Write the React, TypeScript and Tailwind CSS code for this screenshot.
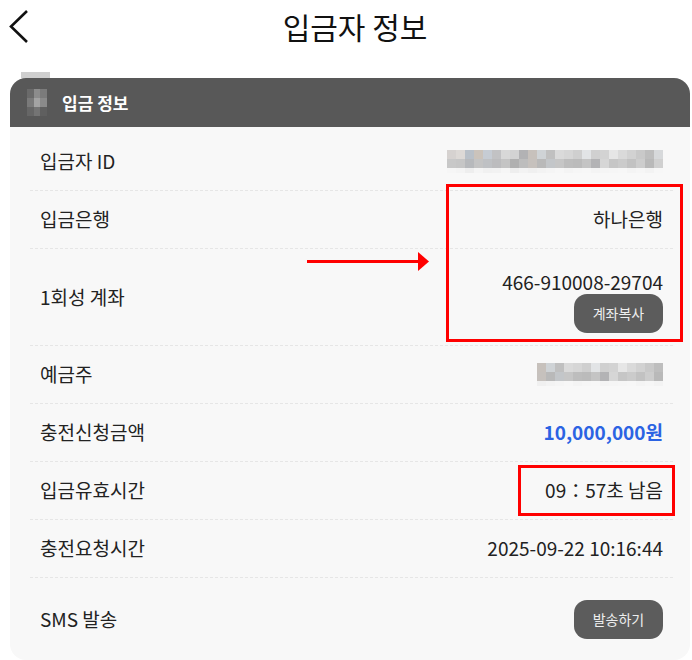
import type { ReactNode } from "react";

const blurTop = [
  "#d6d2d0", "#ddd9d6", "#b9c0c8", "#cbc3bb", "#c6ccd4", "#c2c2c4", "#d8d8d8", "#d3d3d3",
  "#b2b2b4", "#c7c1bc", "#cfd3d6", "#c0c0c0", "#dadada", "#d6d6d6", "#cfcfcf", "#e2e4e6",
  "#d0d0d0", "#d3d3d3", "#e6e6e6", "#dadada", "#d2d2d2", "#c9c9c9", "#bebebe", "#d7d9db",
];
const blurMid = [
  "#c8c8c8", "#c6c6c6", "#b7b9bc", "#c4c4c4", "#bfc1c4", "#bcbcbe", "#c4c4c4", "#b0b0b0",
  "#bdbdbd", "#c6c1bd", "#b9b9b9", "#c3c6c9", "#c6c6c6", "#bdbdbd", "#bbbbbb", "#c4c4c4",
  "#b3b3b5", "#d6d6d6", "#c6c6c6", "#cbcbcb", "#c2c2c2", "#cdcdcd", "#b9b9b9", "#d0d0d0",
];
const blurBot = [
  "#f6f6f6", "#f4f4f4", "#eeeeee", "#f5f5f5", "#f1f1f1", "#f2f2f2", "#f6f6f6", "#eeeeee",
  "#f3f3f3", "#f0f0f0", "#f3f3f3", "#f5f5f5", "#f7f7f7", "#f4f4f4", "#f6f6f6", "#f7f7f7",
  "#f4f4f4", "#f5f5f5", "#f6f6f6", "#f7f7f7", "#f4f4f4", "#f6f6f6", "#f3f3f3", "#f7f7f7",
];

// 모자이크 처리된 값
function Mosaic({ cols, offset = 0 }: { cols: number; offset?: number }) {
  const rows = [blurTop, blurMid, blurBot];
  return (
    <div className="flex flex-col">
      {rows.map((row, r) => (
        <div key={r} className={`flex ${r === 2 ? "h-[5px]" : "h-[9px]"}`}>
          {Array.from({ length: cols }).map((_, c) => (
            <div
              key={c}
              className="w-[9px]"
              style={{ backgroundColor: row[(c + offset) % row.length] }}
            />
          ))}
        </div>
      ))}
    </div>
  );
}

function Row({
  label,
  children,
  className = "h-[58px] items-center",
  last = false,
}: {
  label: string;
  children: ReactNode;
  className?: string;
  last?: boolean;
}) {
  return (
    <div
      className={`flex justify-between px-[10px] ${className} ${
        last ? "" : "border-b border-dashed border-[#e6e6e6]"
      }`}
    >
      <span className="self-center text-[19px] text-[#222]">{label}</span>
      {children}
    </div>
  );
}

export default function App() {
  return (
    <div
      className="relative w-[692px] h-[660px] overflow-hidden bg-white"
      style={{ fontFamily: '"Noto Sans CJK KR", "Noto Sans", sans-serif' }}
    >
      {/* 상단 헤더 */}
      <div className="flex items-center h-[52px]">
        <svg width="40" height="52" viewBox="0 0 40 52" className="shrink-0">
          <polyline
            points="27,11 11,26.5 27,42"
            fill="none"
            stroke="#111"
            strokeWidth="2.6"
          />
        </svg>
        <h1 className="flex-1 text-center pr-[22px] text-[30px] text-[#111] leading-none">
          입금자 정보
        </h1>
      </div>

      {/* 입금 정보 카드 */}
      <div className="relative mt-[26px] ml-[10px] w-[680px] rounded-[16px] bg-[#f8f8f8]">
        <div className="absolute left-[11px] top-[-6px] w-[29px] h-[6px] bg-[#cfcfcf]" />
        <div className="flex items-center h-[49px] rounded-t-[16px] bg-[#585858]">
          <div className="grid grid-cols-3 ml-[17px] w-[20px] h-[27px]">
            <div className="bg-[#6a6a6a]" />
            <div className="bg-[#8c8c8c]" />
            <div className="bg-[#7b7b7b]" />
            <div className="bg-[#7a7a7a]" />
            <div className="bg-[#a3a3a3]" />
            <div className="bg-[#8a8a8a]" />
            <div className="bg-[#666]" />
            <div className="bg-[#747474]" />
            <div className="bg-[#5f5f5f]" />
          </div>
          <span className="ml-[15px] text-[17px] font-bold text-white">입금 정보</span>
        </div>

        <div className="pl-[20px] pr-[17px] pt-[6px]">
          <Row label="입금자 ID">
            <Mosaic cols={24} />
          </Row>
          <Row label="입금은행">
            <span className="text-[19px] text-[#222]">하나은행</span>
          </Row>
          <Row label="1회성 계좌" className="h-[97px]">
            <div className="flex flex-col items-end pt-[21px]">
              <span className="text-[19px] leading-[24px] text-[#222]">466-910008-29704</span>
              <button className="mt-[0px] w-[89px] h-[39px] rounded-[13px] bg-[#5c5c5c] text-[14px] text-[#eee]">
                계좌복사
              </button>
            </div>
          </Row>
          <Row label="예금주">
            <Mosaic cols={14} offset={9} />
          </Row>
          <Row label="충전신청금액">
            <span className="text-[19px] font-bold text-[#2b63e3]">10,000,000원</span>
          </Row>
          <Row label="입금유효시간">
            <span className="text-[19px] text-[#222]">09：57초 남음</span>
          </Row>
          <Row label="충전요청시간">
            <span className="text-[19px] text-[#222]">2025-09-22 10:16:44</span>
          </Row>
          <Row label="SMS 발송" className="h-[82px] items-center" last>
            <button className="w-[89px] h-[39px] rounded-[13px] bg-[#5c5c5c] text-[14px] text-[#eee]">
              발송하기
            </button>
          </Row>
        </div>
      </div>

      {/* 강조 표시 */}
      <div className="absolute left-[446px] top-[184px] w-[237px] h-[158px] border-[3px] border-[#ff0000]" />
      <div className="absolute left-[518px] top-[465px] w-[157px] h-[51px] border-[3px] border-[#ff0000]" />
      <svg
        className="absolute left-[305px] top-[250px]"
        width="126"
        height="24"
        viewBox="0 0 126 24"
      >
        <line x1="2" y1="11.5" x2="116" y2="11.5" stroke="#ff0000" strokeWidth="3" />
        <polygon points="113,2 124,11.5 113,21" fill="#ff0000" />
      </svg>
    </div>
  );
}
